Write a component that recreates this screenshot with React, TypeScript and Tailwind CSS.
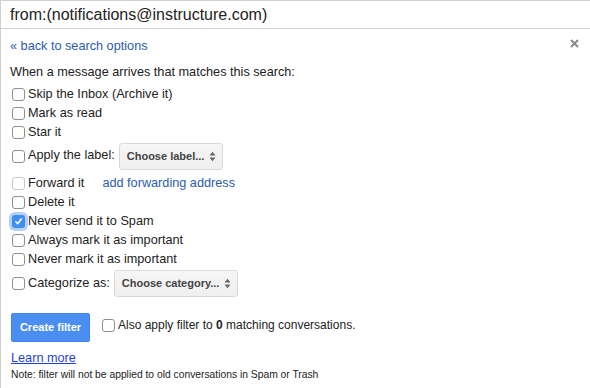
import React from "react";

const font = { fontFamily: '"Liberation Sans", Arial, sans-serif' };

function Box({ checked = false, disabled = false }: { checked?: boolean; disabled?: boolean }) {
  if (checked) {
    return (
      <span className="relative grid size-[13px] shrink-0 place-items-center rounded-[3px] bg-[#3d8ff0] shadow-[0_0_0_3px_rgba(90,150,240,0.45)]">
        <svg width="9" height="9" viewBox="0 0 9 9">
          <path d="M1.8 4.8 L3.7 6.7 L7.3 2" fill="none" stroke="white" strokeWidth="1.6" strokeLinecap="round" strokeLinejoin="round" />
        </svg>
      </span>
    );
  }
  return (
    <span
      className={
        "size-[13px] shrink-0 rounded-[3px] border bg-white " +
        (disabled ? "border-[#c8c8c8]" : "border-[#8f8f8f]")
      }
    />
  );
}

function Row({ label, checked, disabled, children }: { label: string; checked?: boolean; disabled?: boolean; children?: React.ReactNode }) {
  return (
    <div className="flex h-[19px] items-center gap-[3px] pl-[2px]">
      <Box checked={checked} disabled={disabled} />
      <span className="text-[12.7px] text-[#222]">{label}</span>
      {children}
    </div>
  );
}

function Select({ text, width }: { text: string; width: string }) {
  return (
    <div className={"flex h-[27px] items-center justify-between rounded-[3px] border border-[#d9d9d9] bg-gradient-to-b from-[#f6f6f6] to-[#efefef] pl-[7px] pr-[6px] " + width}>
      <span className="text-[11px] font-bold text-[#444]">{text}</span>
      <svg width="7" height="11" viewBox="0 0 7 11">
        <path d="M0.5 4.5 L3.5 0.8 L6.5 4.5 Z M0.5 6.5 L3.5 10.2 L6.5 6.5 Z" fill="#666" />
      </svg>
    </div>
  );
}

export default function App() {
  return (
    <div className="h-[388px] w-[590px] overflow-hidden border-l border-[#cfcfcf] bg-white" style={font}>
      <div className="flex h-[29px] items-center border-y border-[#cfcfcf] px-[9px] text-[16px] text-[#222]">
        from:(notifications@instructure.com)
      </div>
      <div className="relative pl-[9px] pt-[10px]">
        <div className="absolute right-[11px] top-[10px]">
          <svg width="9" height="9" viewBox="0 0 9 9">
            <path d="M1 1 L8 8 M8 1 L1 8" stroke="#8a8a8a" strokeWidth="2" />
          </svg>
        </div>
        <div className="h-[15px] text-[12.7px] leading-[15px] text-[#2a5db0]">« back to search options</div>
        <div className="mt-[11px] h-[15px] text-[12.7px] leading-[15px] text-[#222]">When a message arrives that matches this search:</div>
        <div className="mt-[5px]">
          <Row label="Skip the Inbox (Archive it)" />
          <Row label="Mark as read" />
          <Row label="Star it" />
          <div className="mb-[5px] mt-[1px] flex h-[26px] items-center gap-[3px] pl-[2px]">
            <Box />
            <span className="mr-[1px] text-[12.7px] text-[#222]">Apply the label:</span>
            <Select text="Choose label..." width="w-[104px]" />
          </div>
          <Row label="Forward it" disabled>
            <span className="ml-[15px] text-[12.7px] text-[#2a5db0]">add forwarding address</span>
          </Row>
          <Row label="Delete it" />
          <Row label="Never send it to Spam" checked />
          <Row label="Always mark it as important" />
          <Row label="Never mark it as important" />
          <div className="mt-[1px] flex h-[27px] items-center gap-[3px] pl-[2px]">
            <Box />
            <span className="mr-[1px] text-[12.7px] text-[#222]">Categorize as:</span>
            <Select text="Choose category..." width="w-[124px]" />
          </div>
        </div>
        <div className="mt-[16px] flex items-center gap-[12px] pl-[1px]">
          <div className="flex h-[29px] w-[79px] items-center justify-center rounded-[2px] border border-[#3f84f0] bg-[#4a8ef2] text-[11px] font-bold text-white">
            Create filter
          </div>
          <div className="-mt-[5px] flex items-center gap-[3px]">
            <Box />
            <span className="text-[12px] text-[#222]">
              Also apply filter to <b>0</b> matching conversations.
            </span>
          </div>
        </div>
        <div className="mt-[9px] h-[15px] pl-[1px] text-[12.7px] leading-[15px] text-[#1f3fd6] underline">Learn more</div>
        <div className="mt-[1px] pl-[1px] text-[10.3px] text-[#222]">Note: filter will not be applied to old conversations in Spam or Trash</div>
      </div>
    </div>
  );
}
